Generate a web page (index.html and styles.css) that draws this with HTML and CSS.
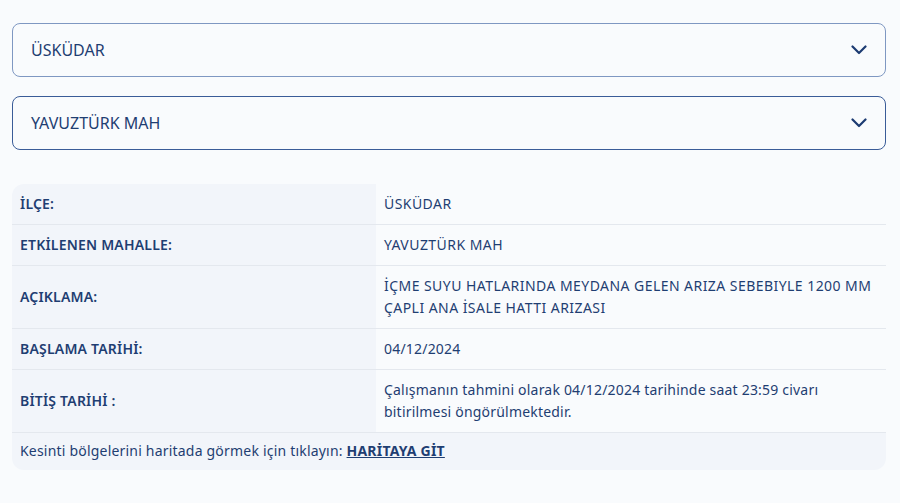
FILE: index.html
```html
<!DOCTYPE html>
<html lang="tr">
<head>
  <meta charset="UTF-8">
  <meta name="viewport" content="width=device-width, initial-scale=1.0">
  <title>Arıza Kesinti Bilgisi</title>
  <link rel="stylesheet" href="styles.css">
</head>
<body>
  <main class="page">
    <div class="picker picker-light">
      <span>ÜSKÜDAR</span>
      <svg class="chevron" width="16" height="10" viewBox="0 0 16 10"><path d="M1.5 1.5 L8 8 L14.5 1.5" fill="none" stroke="currentColor" stroke-width="2.2" stroke-linecap="round" stroke-linejoin="round"/></svg>
    </div>
    <div class="picker picker-dark">
      <span>YAVUZTÜRK MAH</span>
      <svg class="chevron" width="16" height="10" viewBox="0 0 16 10"><path d="M1.5 1.5 L8 8 L14.5 1.5" fill="none" stroke="currentColor" stroke-width="2.2" stroke-linecap="round" stroke-linejoin="round"/></svg>
    </div>

    <table class="info">
      <tr>
        <th>İLÇE:</th>
        <td class="caps">ÜSKÜDAR</td>
      </tr>
      <tr>
        <th>ETKİLENEN MAHALLE:</th>
        <td class="caps">YAVUZTÜRK MAH</td>
      </tr>
      <tr>
        <th>AÇIKLAMA:</th>
        <td class="caps">İÇME SUYU HATLARINDA MEYDANA GELEN ARIZA SEBEBIYLE 1200 MM ÇAPLI ANA İSALE HATTI ARIZASI</td>
      </tr>
      <tr>
        <th>BAŞLAMA TARİHİ:</th>
        <td>04/12/2024</td>
      </tr>
      <tr>
        <th>BİTİŞ TARİHİ :</th>
        <td>Çalışmanın tahmini olarak 04/12/2024 tarihinde saat 23:59 civarı bitirilmesi öngörülmektedir.</td>
      </tr>
      <tr class="foot">
        <td colspan="2">Kesinti bölgelerini haritada görmek için tıklayın: <a href="#">HARİTAYA GİT</a></td>
      </tr>
    </table>
  </main>
</body>
</html>
```

FILE: styles.css
```css
body {
  margin: 0;
  background-color: #f9fbfd;
  font-family: "Noto Sans", "Open Sans", sans-serif;
  color: #1f3e72;
}
.page {
  padding: 23px 14px 0 12px;
}
.picker {
  display: flex;
  align-items: center;
  justify-content: space-between;
  height: 52px;
  padding: 0 18px;
  margin-bottom: 19px;
  border: 1px solid #7f98c2;
  border-radius: 8px;
  font-size: 16px;
  background-color: #f9fbfd;
}
.picker-dark {
  border-color: #3a5c98;
}
.chevron {
  color: #1c3b72;
}
.info {
  width: 100%;
  margin-top: 34px;
  border-collapse: separate;
  border-spacing: 0;
  font-size: 14px;
  letter-spacing: 0.2px;
  line-height: 22px;
}
.info th,
.info td {
  padding: 9px 8px;
  text-align: left;
  vertical-align: middle;
  border-bottom: 1px solid #e4e8ee;
}
.info th {
  width: 348px;
  font-weight: 600;
  background-color: #f2f5fa;
}
.info td {
  background-color: #f9fbfd;
}
.info td.caps {
  letter-spacing: 0.45px;
}
.info tr:first-child th {
  border-top-left-radius: 12px;
}
.info tr.foot td {
  padding: 7px 8px 8px;
  background-color: #f2f5fa;
  border-bottom: none;
  border-radius: 0 0 12px 12px;
}
.info a {
  color: #1f3e72;
  font-weight: 700;
}
```
